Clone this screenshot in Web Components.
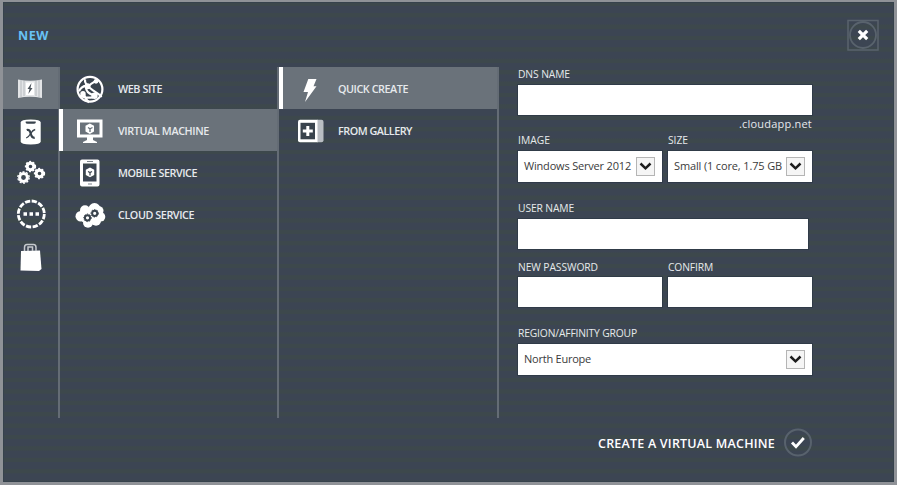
<!DOCTYPE html>
<html lang="en">
<head>
<meta charset="utf-8">
<title>New virtual machine</title>
<style>
html,body{margin:0;padding:0;height:485px;overflow:hidden}
body{font-family:"Open Sans","Noto Sans",sans-serif;color:#e6e9ec}
</style>
</head>
<body>
<create-drawer>
  <icon-rail slot="rail"></icon-rail>
  <menu-column slot="menu" style="--w:220px">
    <menu-item icon="globe" label="WEB SITE" fit="44"></menu-item>
    <menu-item icon="monitor" label="VIRTUAL MACHINE" fit="91" selected></menu-item>
    <menu-item icon="phone" label="MOBILE SERVICE" fit="79"></menu-item>
    <menu-item icon="cloud" label="CLOUD SERVICE" fit="76"></menu-item>
  </menu-column>
  <menu-column slot="menu" style="--w:220px">
    <menu-item icon="bolt" label="QUICK CREATE" fit="70" selected></menu-item>
    <menu-item icon="gallery" label="FROM GALLERY" fit="74"></menu-item>
  </menu-column>
  <vm-form slot="form"></vm-form>
</create-drawer>
<script>
const holes = '#39434d';
const icons = {
  panels: `<path d="M2 5.500Q14 8 26 5.500V24Q14 21.500 2 24Z" fill="#e3e5e7"/><path d="M5 6V23M8 7V22M20 7V22M23 6V23" stroke="#b6babe" stroke-width="1"/><path d="M10 8.500H18V21H10Z" fill="#fff"/><path d="M15.500 9L11.500 15H13.500L12.300 20L16.500 14H14.500Z" fill="#4a525a"/>`,
  database: `<g transform="translate(.7 1.500)"><path d="M4 5Q4 2 14 2T24 5V24Q24 27 14 27T4 24Z"/><path d="M9 4H19V5Q19 6.300 17 6.300H11Q9 6.300 9 5Z" fill="${holes}"/><path d="M10 12.500Q13 11.500 14 16T18 20.300" fill="none" stroke="${holes}" stroke-width="2.200"/><path d="M18.500 12Q16 12.500 14 16T9.500 20.500" fill="none" stroke="${holes}" stroke-width="1.300"/></g>`,
  gears: `<g fill="none" stroke="#fff"><g stroke-width="3"><circle cx="14.500" cy="8.500" r="3.300"/><circle cx="7.500" cy="19.500" r="3.900"/><circle cx="23.500" cy="15.500" r="3.300"/></g><g stroke-width="1.300" stroke-dasharray="2 1.600"><circle cx="14.500" cy="8.500" r="5"/><circle cx="7.500" cy="19.500" r="5.700"/><circle cx="23.500" cy="15.500" r="5"/></g></g>`,
  network: `<circle cx="15.300" cy="14" r="13" fill="none" stroke="#fff" stroke-width="2.800" stroke-dasharray="5.300 1.507"/><path d="M7.500 12.300H11V15.800H7.500ZM13.500 12.300H17V15.800H13.500ZM19.500 12.300H23V15.800H19.500Z"/>`,
  bag: `<g transform="translate(0 1)"><path d="M5 8L24 7.500L25.500 26L23 28L4.500 27.500Z"/><path d="M8.500 8V4.500Q8.500 1.500 11 1.500H17.500Q20 1.500 20 4.500V8M12 8V4H16.500V8" fill="none" stroke="#c5c9cd" stroke-width="1.500"/></g>`,
  globe: `<g transform="translate(0 1.300)"><circle cx="14" cy="14" r="12.400" fill="${holes}" stroke="#fff" stroke-width="2.200"/><path d="M9 4Q8 9 17 15T25 21M11 13Q14 8 22 5M3 16Q5 11 11 10M10 12Q10 18 18 20M4 20Q7 23 17 22M8 19Q9 24 13 27" fill="none" stroke="#fff" stroke-width="2.200"/><circle cx="11.500" cy="11" r="3"/><circle cx="7" cy="18.500" r="2.700"/><circle cx="18.500" cy="20.500" r="3.200"/><circle cx="20" cy="6" r="2.400"/></g>`,
  monitor: `<g transform="translate(0 1)"><path d="M1 2.500H26.500V20.500H17V23L21 25V26H7V25L11 23V20.500H1ZM4 5.500V17.500H23.500V5.500Z" fill-rule="evenodd"/><path d="M13.800 6.500L18 8.700V14.500L13.800 17L9.500 14.500V8.700Z"/><path d="M12 10.500L14 11.800L16.500 10.500M14 12V15" stroke="#69717a" stroke-width="1.300" fill="none"/></g>`,
  phone: `<path d="M6 1.500H21.500Q23.500 1.500 23.500 3.500V26.500Q23.500 28.500 21.500 28.500H6Q4 28.500 4 26.500V3.500Q4 1.500 6 1.500ZM7 5.500V23.500H20.500V5.500Z" fill-rule="evenodd"/><path d="M11 3.500H17M12 26H16" stroke="#7a828a" stroke-width="1"/><path d="M14 9.500L18.200 11.700V17L14 19.300L9.800 17V11.700Z"/><path d="M12 13.500L14 14.500L16 13.500M14 14.500V17.500" stroke="${holes}" stroke-width="1.200" fill="none"/>`,
  cloud: `<g transform="translate(0 1.800)"><circle cx="4.800" cy="14.500" r="5.300"/><circle cx="9" cy="8.500" r="5"/><circle cx="18.500" cy="7.500" r="6.200"/><circle cx="23" cy="9" r="4.500"/><circle cx="24.500" cy="15" r="4.800"/><circle cx="12" cy="21" r="5"/><circle cx="20" cy="19" r="5"/><path d="M6 8H23V20H6Z"/><g fill="none" stroke="${holes}" stroke-width="2"><circle cx="11.500" cy="16" r="2.600"/><circle cx="18.700" cy="11.500" r="2.600"/></g><g fill="none" stroke="${holes}" stroke-width="1" stroke-dasharray="1.300 1.500"><circle cx="11.500" cy="16" r="3.800"/><circle cx="18.700" cy="11.500" r="3.800"/></g></g>`,
  bolt: `<path d="M12.300 5H20.500L17.500 12.300H20.500L9 28L12 18H7.500Z"/>`,
  gallery: `<g transform="translate(1 1.300)"><path d="M3 2.500H21V25H3Q1 25 1 23V4.500Q1 2.500 3 2.500Z"/><path d="M20.500 2.500H24.500Q26.500 2.500 26.500 4.500V23Q26.500 25 24.500 25H20.500Z" fill="#b9bdc3"/><path d="M3.500 5.500H18V22H3.500Z" fill="${holes}"/><path d="M10.800 8.800V18.800M5.800 13.800H15.800" stroke="#fff" stroke-width="3"/></g>`
};

class Base extends HTMLElement {
  paint(html) {
    if (!this.shadowRoot) this.attachShadow({mode:'open'});
    this.shadowRoot.innerHTML = html;
  }
}

/* One line of text whose tracking is adjusted to fill the given width. */
customElements.define('fit-text', class extends Base {
  connectedCallback() {
    this.paint(`<style>:host{display:block;white-space:nowrap;line-height:14px}span{display:inline-block}</style><span></span>`);
    const s = this.shadowRoot.querySelector('span');
    const t = this.getAttribute('text');
    s.textContent = t;
    const w = s.getBoundingClientRect().width;
    const target = +this.getAttribute('width');
    const gap = (target - w) / t.length;
    s.style.letterSpacing = gap.toFixed(3) + 'px';
  }
});

customElements.define('glyph-icon', class extends Base {
  connectedCallback() {
    this.paint(`<style>:host{display:block;width:28px;height:28px;flex:none}svg{display:block;overflow:visible}</style>
    <svg width="28" height="28" viewBox="0 0 28 28" fill="#fff">${icons[this.getAttribute('name')]}</svg>`);
  }
});

customElements.define('icon-rail', class extends Base {
  connectedCallback() {
    this.paint(`<style>:host{display:flex;flex-direction:column;width:55px;height:351px}
    div{height:42px;display:flex;align-items:center;justify-content:center;box-sizing:border-box;padding-right:1px}
    .on{background:#6a727a}</style>
    ${['panels','database','gears','network','bag'].map((n,i)=>`<div class="${i?'':'on'}"><glyph-icon name="${n}"></glyph-icon></div>`).join('')}`);
  }
});

customElements.define('menu-column', class extends Base {
  connectedCallback() {
    this.paint(`<style>:host{display:flex;flex-direction:column;box-sizing:border-box;width:var(--w);height:351px;border-right:2px solid #646c75}</style><slot></slot>`);
  }
});

customElements.define('menu-item', class extends Base {
  connectedCallback() {
    this.paint(`<style>:host{display:flex;align-items:center;height:42px;gap:14px;box-sizing:border-box;border-left:4px solid transparent;padding-left:13px;font-size:10.800px;font-weight:600}
    :host([selected]){background:#6a727a;border-left-color:#fff}
    fit-text{padding-top:2px}</style>
    <glyph-icon name="${this.getAttribute('icon')}"></glyph-icon>
    <fit-text text="${this.getAttribute('label')}" width="${this.getAttribute('fit')}"></fit-text>`);
  }
});

customElements.define('form-field', class extends Base {
  connectedCallback() {
    const a = n => this.getAttribute(n);
    const select = a('value') !== null;
    this.paint(`<style>:host{display:block;font-size:10.300px}
    .label{height:var(--gap,17px)}
    .box{height:${select?31:30}px;background:#fff;color:#3b3b3b;box-shadow:0 0 0 1px #303b48;display:flex;align-items:center;justify-content:space-between;box-sizing:border-box;padding:0 7px 0 6px;font-size:11px}
    .box fit-text{padding-bottom:1px}
    .arrow{width:19px;height:19px;box-sizing:border-box;border:1px solid #b5b5b5;background:#f5f5f5;display:flex;align-items:center;justify-content:center}</style>
    <div class="label"><fit-text text="${a('label')}" width="${a('fit')}"></fit-text></div>
    <div class="box">${select?`<fit-text text="${a('value')}" width="${a('value-fit')}"></fit-text><div class="arrow"><svg width="13" height="9" viewBox="0 0 13 9"><path d="M1.500 1.500L6.500 6.300L11.500 1.500" fill="none" stroke="#1c1c1c" stroke-width="2.500"/></svg></div>`:''}</div>`);
  }
});

customElements.define('vm-form', class extends Base {
  connectedCallback() {
    this.paint(`<style>:host{display:block;width:294px;padding-left:19px}
    .two{display:grid;grid-template-columns:144px 144px;gap:6px}
    .suffix{display:flex;justify-content:flex-end;height:16px;font-size:11px;padding-top:2px}
    .suffix fit-text{height:14px}
    .user{width:290px;margin-top:19px}.pass{margin-top:11px}.region{margin-top:19px}</style>
    <form-field label="DNS NAME" fit="52" style="--gap:18px"></form-field>
    <div class="suffix"><fit-text text=".cloudapp.net" width="73"></fit-text></div>
    <div class="two"><form-field label="IMAGE" fit="32" style="--gap:18px" value="Windows Server 2012" value-fit="107"></form-field>
    <form-field label="SIZE" fit="20" style="--gap:18px" value="Small (1 core, 1.75 GB" value-fit="108"></form-field></div>
    <form-field class="user" label="USER NAME" fit="56" style="--gap:18px"></form-field>
    <div class="two pass"><form-field label="NEW PASSWORD" fit="80"></form-field>
    <form-field label="CONFIRM" fit="45"></form-field></div>
    <form-field class="region" label="REGION/AFFINITY GROUP" fit="119" style="--gap:18px" value="North Europe" value-fit="67"></form-field>`);
  }
});

customElements.define('create-drawer', class extends Base {
  connectedCallback() {
    this.paint(`<style>
    :host{display:flex;flex-direction:column;box-sizing:border-box;width:897px;height:485px;border:solid #8f9297;border-width:2px 3px 3px;
      background:repeating-linear-gradient(#3d484c 0 3.700px,#3c4553 4.300px 10.800px,#3d484c 11.400px);
      box-shadow:inset 0 0 0 1px #36424c}
    header{height:65px;box-sizing:border-box;display:flex;justify-content:space-between;padding:17px 15px 0 15px;color:#68c2f4;font-size:12.500px;font-weight:700}
    header fit-text{padding-top:10px}
    main{display:flex;height:351px}
    .rail{border-right:2px solid #646c75;margin-right:-1px}
    footer{flex:1;display:flex;justify-content:flex-end;align-items:flex-start;gap:9px;padding:10px 82px 0 0;font-size:12.500px;font-weight:600;color:#fff}
    footer fit-text{padding-top:9px}
    svg{display:block}
    </style>
    <header><fit-text text="NEW" width="31"></fit-text>
      <svg width="32" height="32" viewBox="0 0 32 32"><path d="M1 1.500H31V31H1Z" fill="none" stroke="#59636d" stroke-width="1.500"/><circle cx="16" cy="16" r="13" fill="none" stroke="#59636d" stroke-width="1.800"/><path d="M11.800 11.800L20.200 20.200M20.200 11.800L11.800 20.200" stroke="#fff" stroke-width="3.200"/></svg>
    </header>
    <main><div class="rail"><slot name="rail"></slot></div><slot name="menu"></slot><div class="form"><slot name="form"></slot></div></main>
    <footer><fit-text text="CREATE A VIRTUAL MACHINE" width="177"></fit-text>
      <svg width="28" height="30" viewBox="0 0 28 30"><circle cx="14" cy="14.500" r="13" fill="none" stroke="#58626d" stroke-width="2"/><path d="M8 14.500L12 18.700L19.800 10" fill="none" stroke="#fff" stroke-width="2.800"/></svg>
    </footer>`);
  }
});
</script>
</body>
</html>
